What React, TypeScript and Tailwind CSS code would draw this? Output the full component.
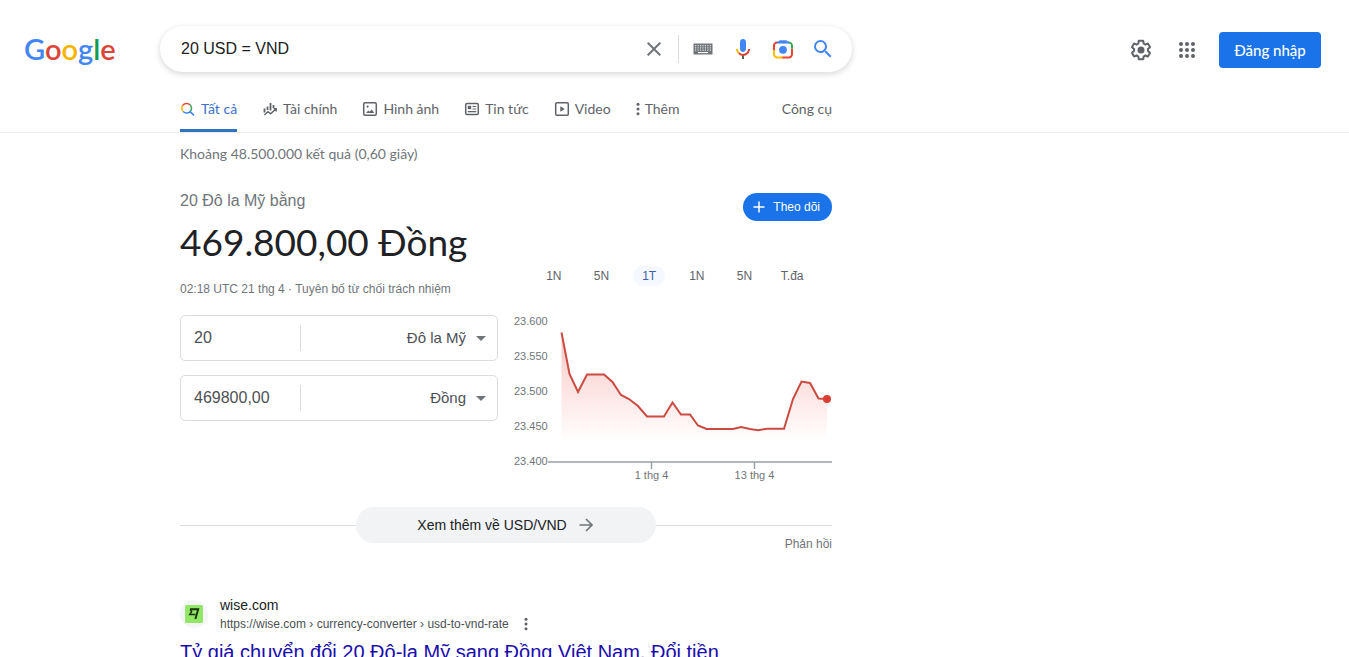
import { useState } from "react";
import type { ReactNode } from "react";

const RANGES = ["1N", "5N", "1T", "1N", "5N", "T.đa"];

const POINTS: [number, number][] = [
  [49.5, 20.5], [57.5, 62], [66, 80], [75, 62.5], [92, 62.5], [100.5, 70], [109, 83],
  [117, 87], [126, 94], [135, 104.5], [152, 104.5], [160.5, 90.5], [169, 102.5],
  [178, 102.5], [186, 113.5], [194.5, 117], [221, 117], [229, 115], [238, 117],
  [246, 118.2], [255, 116.8], [272, 116.8], [281, 87], [289.5, 69.5], [298, 71],
  [306.5, 86.5], [315, 87],
];

const GRID = ["23.600", "23.550", "23.500", "23.450", "23.400"];

function Logo() {
  return (
    <a href="#" aria-label="Google" className="block font-['Lato',sans-serif] text-[29px] leading-9 font-semibold">
      <span className="text-[#4285f4]">G</span>
      <span className="text-[#db4437]">o</span>
      <span className="text-[#f4b400]">o</span>
      <span className="text-[#4285f4]">g</span>
      <span className="text-[#0f9d58]">l</span>
      <span className="text-[#db4437]">e</span>
    </a>
  );
}

function CloseIcon() {
  return (
    <svg viewBox="0 0 24 24" className="size-6" fill="#70757a">
      <path d="M19 6.41L17.59 5 12 10.59 6.41 5 5 6.41 10.59 12 5 17.59 6.41 19 12 13.41 17.59 19 19 17.59 13.41 12z" />
    </svg>
  );
}

function KeyboardIcon() {
  const cols = [2, 4.5, 7, 9.4, 11.8, 14.2, 16.7];
  return (
    <svg viewBox="0 0 20 12" className="h-3 w-5">
      <rect x="0.5" y="0.5" width="19" height="11" fill="#70757a" />
      {[2.2, 4.4, 6.6].map((y) =>
        cols.map((x) => <rect key={`${x}-${y}`} x={x} y={y} width="1.2" height="1" fill="#fff" />)
      )}
      <rect x="5" y="9" width="10" height="1.1" fill="#fff" />
    </svg>
  );
}

function MicIcon() {
  return (
    <svg viewBox="0 0 24 24" className="size-6">
      <path fill="#4285f4" d="M12 15c1.66 0 3-1.31 3-2.97V4.98C15 3.32 13.66 2 12 2S9 3.32 9 4.98v7.05C9 13.69 10.34 15 12 15z" />
      <path fill="#4f6b58" d="M11 18.08h2V22h-2z" />
      <path fill="#fbbc04" d="M7.05 16.87C5.78 15.59 5 13.83 5 11.99h2c0 1.45.56 2.42 1.47 3.38l-1.42 1.5z" />
      <path fill="#d8453a" d="M12 16.93c-1.44 0-2.61-.57-3.53-1.56l-1.41 1.49C8.33 18.14 10.07 18.99 12 18.99c3.87 0 6.99-3.13 6.99-7H17c-.01 2.76-2.24 4.94-5 4.94z" />
    </svg>
  );
}

function LensIcon() {
  return (
    <svg viewBox="0 0 24 24" className="size-6" fill="none" strokeWidth="2">
      <path stroke="#ea4335" d="M3 13.2V8.6A3.2 3.2 0 0 1 6.2 5.4M21 11.5V17.2A3.2 3.2 0 0 1 17.8 20.4H11" />
      <path stroke="#34a853" d="M17.5 5.4A3.4 3.4 0 0 1 21 8.8V11.5" />
      <path stroke="#4285f4" d="M6 5.4H18" />
      <path stroke="#fbbc04" d="M3 13V17.2A3.2 3.2 0 0 0 6.2 20.4H11.5" />
      <path fill="#4285f4" d="M6.5 6.2L8.6 3.2h6.8l2.1 3z" />
      <circle cx="12" cy="12.8" r="3.9" fill="#4285f4" />
    </svg>
  );
}

function SearchIcon() {
  return (
    <svg viewBox="0 0 24 24" className="size-6" fill="#4285f4">
      <path d="M15.5 14h-.79l-.28-.27A6.471 6.471 0 0 0 16 9.5 6.5 6.5 0 1 0 9.5 16c1.61 0 3.09-.59 4.23-1.57l.27.28v.79l5 4.99L20.49 19l-4.99-5zm-6 0C7.01 14 5 11.99 5 9.5S7.01 5 9.5 5 14 7.01 14 9.5 11.99 14 9.5 14z" />
    </svg>
  );
}

function GearIcon() {
  return (
    <svg viewBox="0 0 24 24" className="size-6" fill="#5f6368">
      <path d="M13.85 22.25h-3.7c-.74 0-1.36-.54-1.45-1.27l-.27-1.89c-.27-.14-.53-.29-.79-.46l-1.8.72c-.7.26-1.47-.03-1.81-.65L2.2 15.53c-.35-.66-.2-1.44.36-1.88l1.53-1.19c-.01-.15-.02-.3-.02-.46 0-.15.01-.31.02-.46l-1.52-1.19c-.59-.45-.74-1.26-.37-1.88l1.85-3.19c.34-.62 1.11-.9 1.79-.63l1.81.73c.26-.17.52-.32.78-.46l.27-1.91c.09-.7.71-1.25 1.44-1.25h3.7c.74 0 1.36.54 1.45 1.27l.27 1.89c.27.14.53.29.79.46l1.8-.72c.71-.26 1.48.03 1.82.65l1.84 3.18c.36.66.2 1.44-.36 1.88l-1.52 1.19c.01.15.02.3.02.46s-.01.31-.02.46l1.52 1.19c.56.45.72 1.23.37 1.86l-1.86 3.22c-.34.62-1.11.9-1.8.63l-1.8-.72c-.26.17-.52.32-.78.46l-.27 1.91c-.1.68-.72 1.22-1.46 1.22zm-3.23-2h2.76l.37-2.55.53-.22c.44-.18.88-.44 1.34-.78l.45-.34 2.38.96 1.38-2.4-2.03-1.58.07-.56c.03-.26.06-.51.06-.78s-.03-.53-.06-.78l-.07-.56 2.03-1.58-1.39-2.4-2.39.96-.45-.35c-.42-.32-.87-.58-1.33-.77l-.52-.22-.37-2.55h-2.76l-.37 2.55-.53.21c-.44.19-.88.44-1.34.79l-.45.33-2.38-.95-1.39 2.39 2.03 1.58-.07.56a7 7 0 0 0-.06.79c0 .26.02.53.06.78l.07.56-2.03 1.58 1.38 2.4 2.39-.96.45.35c.43.33.86.58 1.33.77l.53.22.38 2.55z" />
      <circle cx="12" cy="12" r="3.5" />
    </svg>
  );
}

function AppsIcon() {
  return (
    <svg viewBox="0 0 24 24" className="size-6" fill="#5f6368">
      {[6, 12, 18].map((y) => [6, 12, 18].map((x) => <circle key={`${x}-${y}`} cx={x} cy={y} r="2" />))}
    </svg>
  );
}

function AllIcon() {
  return (
    <svg viewBox="0 0 16 16" className="size-4" fill="none" strokeWidth="1.5">
      <path stroke="#ea4335" d="M2.6 4.6A4.8 4.8 0 0 1 10 3.8" />
      <path stroke="#fbbc04" d="M3.2 10.4A4.8 4.8 0 0 1 2.6 4.6" />
      <path stroke="#34a853" d="M10 3.8A4.8 4.8 0 0 1 10.2 10.6" />
      <path stroke="#4285f4" d="M3.2 10.4A4.8 4.8 0 0 0 10.2 10.6L14 14.4" />
    </svg>
  );
}

function FinanceIcon() {
  return (
    <svg viewBox="0 0 16 16" className="size-4" fill="none" stroke="#5f6368">
      <path d="M2.5 7.5V11.5M5.5 5.5V9M8.5 2V9.5M11.5 4V7" strokeWidth="1.8" />
      <path d="M2.4 14L6 10.6L8.6 12.8L13.6 8.2M11.6 7.8H14.2V10.4" strokeWidth="1.4" />
    </svg>
  );
}

function ImageIcon() {
  return (
    <svg viewBox="0 0 16 16" className="size-4" fill="none" stroke="#5f6368">
      <rect x="1.7" y="1.7" width="12.6" height="12.6" rx="1.5" strokeWidth="1.5" />
      <path d="M4 12L6.3 9.4L7.7 10.8L9.7 8.6L12.3 12z" fill="#5f6368" stroke="none" />
      <circle cx="5.6" cy="5.6" r="1.1" fill="#5f6368" stroke="none" />
    </svg>
  );
}

function NewsIcon() {
  return (
    <svg viewBox="0 0 16 16" className="size-4" fill="none" stroke="#5f6368">
      <rect x="1.7" y="2.5" width="12.6" height="11" rx="1.3" strokeWidth="1.5" />
      <rect x="3.8" y="4.8" width="3.4" height="3.4" fill="#5f6368" stroke="none" />
      <path d="M8.5 5.5H12.3M8.5 8H12.3M3.8 10.6H12.3" strokeWidth="1.2" />
    </svg>
  );
}

function VideoIcon() {
  return (
    <svg viewBox="0 0 16 16" className="size-4" fill="none" stroke="#5f6368">
      <rect x="1.7" y="1.7" width="12.6" height="12.6" rx="1.3" strokeWidth="1.5" />
      <path d="M6.3 5.2L10.7 8L6.3 10.8z" fill="#5f6368" stroke="none" />
    </svg>
  );
}

function DotsIcon() {
  return (
    <svg viewBox="0 0 4 16" className="h-4 w-1" fill="#5f6368">
      <circle cx="2" cy="3.2" r="1.5" />
      <circle cx="2" cy="8" r="1.5" />
      <circle cx="2" cy="12.8" r="1.5" />
    </svg>
  );
}

function NavItem({ icon, label, active }: { icon: ReactNode; label: string; active?: boolean }) {
  return (
    <a
      href="#"
      className={
        active
          ? "flex h-full items-center gap-[5px] border-b-3 border-[#2f72bd] pt-[3px] text-[#3b70c9]"
          : "flex h-full items-center gap-[5px] text-[#5f6368]"
      }
    >
      {icon}
      {label}
    </a>
  );
}

function SearchBox() {
  const [query, setQuery] = useState("20 USD = VND");
  return (
    <form
      className="flex h-[46px] w-full max-w-[692px] items-center rounded-full bg-white pr-[17px] pl-[21px] shadow-[0_2px_5px_1px_rgba(64,60,67,0.16)]"
      onSubmit={(e) => e.preventDefault()}
    >
      <input
        aria-label="Tìm kiếm"
        className="min-w-0 flex-1 bg-transparent text-base text-[#202124] outline-none"
        value={query}
        onChange={(e) => setQuery(e.target.value)}
      />
      <button type="button" aria-label="Xóa" className="mr-3" onClick={() => setQuery("")}>
        <CloseIcon />
      </button>
      <div className="flex items-center gap-4 border-l border-[#dadce0] py-[2px] pl-3">
        <button type="button" aria-label="Bàn phím" className="flex w-6 justify-center"><KeyboardIcon /></button>
        <button type="button" aria-label="Giọng nói"><MicIcon /></button>
        <button type="button" aria-label="Hình ảnh"><LensIcon /></button>
        <button type="submit" aria-label="Tìm"><SearchIcon /></button>
      </div>
    </form>
  );
}

function CurrencyRow({ id, amount, currency }: { id: string; amount: string; currency: string }) {
  const [value, setValue] = useState(amount);
  return (
    <div className="flex h-[46px] items-center rounded-[5px] border border-[#dadce0] text-[#4d5156]">
      <input
        id={id}
        aria-label={`Số tiền ${currency}`}
        className="h-[26px] w-[120px] border-r border-[#dadce0] pl-[13px] text-base outline-none"
        value={value}
        onChange={(e) => setValue(e.target.value)}
      />
      <label className="flex min-w-0 flex-1 items-center justify-end gap-[10px] pr-[11px]">
        <select
          aria-label="Đơn vị tiền tệ"
          className="flex-1 appearance-none bg-transparent text-[15px] outline-none [text-align-last:right]"
        >
          <option>{currency}</option>
        </select>
        <svg viewBox="0 0 10 5" className="h-[5px] w-[10px]" fill="#70757a">
          <path d="M0 0h10L5 5z" />
        </svg>
      </label>
    </div>
  );
}

function RateChart() {
  const line = POINTS.map((p) => p.join(",")).join(" ");
  const [endX, endY] = POINTS[POINTS.length - 1];
  return (
    <svg viewBox="0 0 320 175" className="w-full font-['Liberation_Sans',Arial,sans-serif]" role="img" aria-label="USD/VND">
      <defs>
        <linearGradient id="fade" x1="0" y1="20" x2="0" y2="130" gradientUnits="userSpaceOnUse">
          <stop offset="0" stopColor="#ea4335" stopOpacity="0.3" />
          <stop offset="1" stopColor="#ea4335" stopOpacity="0" />
        </linearGradient>
      </defs>
      {GRID.map((label, i) => (
        <text key={label} x="2" y={13 + i * 35} fontSize="11" fill="#70757a">
          {label}
        </text>
      ))}
      <polygon points={`49.5,149 ${line} 315,149`} fill="url(#fade)" />
      <polyline points={line} fill="none" stroke="#cb4b41" strokeWidth="2" />
      <circle cx={endX} cy={endY} r="4" fill="#d93f33" />
      <path d="M36 150H320M139.5 150v7M242.5 150v7" stroke="#9aa0a6" strokeWidth="1.5" fill="none" />
      <text x="139.5" y="167" fontSize="11" fill="#70757a" textAnchor="middle">1 thg 4</text>
      <text x="242.5" y="167" fontSize="11" fill="#70757a" textAnchor="middle">13 thg 4</text>
    </svg>
  );
}

function Converter() {
  const [range, setRange] = useState(2);
  return (
    <section className="mt-[25px]">
      <div className="flex items-start justify-between">
        <div>
          <h2 className="text-base leading-6 text-[#70757a]">20 Đô la Mỹ bằng</h2>
          <p className="mt-[6px] font-['Lato',sans-serif] text-[37px] leading-[46px] text-[#202124]">469.800,00 Đồng</p>
        </div>
        <button className="mt-1 flex h-7 items-center gap-2 rounded-full bg-[#1a73e8] pr-3 pl-[10px] text-xs font-medium text-white">
          <svg viewBox="0 0 12 12" className="size-3" stroke="#fff" strokeWidth="1.5">
            <path d="M6 0.5v11M0.5 6h11" />
          </svg>
          Theo dõi
        </button>
      </div>

      <div className="mt-px flex gap-[14px]">
        <div className="w-[318px]">
          <p className="pt-[15px] text-xs leading-4 whitespace-nowrap text-[#70757a]">
            02:18 UTC 21 thg 4 · <a href="#">Tuyên bố từ chối trách nhiệm</a>
          </p>
          <div className="mt-[18px] flex flex-col gap-[14px]">
            <CurrencyRow id="from" amount="20" currency="Đô la Mỹ" />
            <CurrencyRow id="to" amount="469800,00" currency="Đồng" />
          </div>
        </div>
        <div className="min-w-0 flex-1">
          <div className="flex justify-between pr-4 pl-[18px]">
            {RANGES.map((label, i) => (
              <button key={i} onClick={() => setRange(i)} className="flex h-5 w-12 justify-center text-xs leading-5">
                <span className={i === range ? "w-8 rounded-full bg-[#f5f8fe] text-[#3c5fae]" : "text-[#5f6368]"}>
                  {label}
                </span>
              </button>
            ))}
          </div>
          <div className="mt-[26px]">
            <RateChart />
          </div>
        </div>
      </div>

      <div className="mt-5 flex items-center">
        <span className="h-px flex-1 bg-[#dadce0]" />
        <a href="#" className="flex h-9 w-[300px] items-center justify-center gap-3 rounded-full bg-[#f1f3f4] pr-[2px] text-sm text-[#202124]">
          Xem thêm về USD/VND
          <svg viewBox="0 0 14 14" className="size-[14px]" fill="none" stroke="#70757a" strokeWidth="1.6">
            <path d="M0.5 7H13M7 1L13 7L7 13" />
          </svg>
        </a>
        <span className="h-px flex-1 bg-[#dadce0]" />
      </div>
      <div className="-mt-[7px] text-right text-xs leading-4 text-[#70757a]">
        <a href="#">Phản hồi</a>
      </div>
    </section>
  );
}

function Result() {
  return (
    <article className="mt-[43px]">
      <div className="flex items-center">
        <span className="flex size-7 items-center justify-center rounded-full bg-[#f5f6f7]">
          <svg viewBox="0 0 18 18" className="size-[18px]">
            <rect width="18" height="18" rx="1.5" fill="#94e667" />
            <path d="M5 4.3H13.2L10.4 14" fill="none" stroke="#163300" strokeWidth="1.9" />
            <path d="M5.2 4.3L6.6 6.8L4.8 9.4H10.5" fill="none" stroke="#163300" strokeWidth="1.5" />
          </svg>
        </span>
        <div className="ml-3">
          <p className="text-sm leading-5 text-[#202124]">wise.com</p>
          <p className="text-xs leading-[18px] text-[#4d5156]">https://wise.com › currency-converter › usd-to-vnd-rate</p>
        </div>
        <button aria-label="Tùy chọn" className="ml-[15px] self-end pb-px">
          <DotsIcon />
        </button>
      </div>
      <h3 className="mt-[6px] text-xl leading-[26px] text-[#1a0dab]">
        <a href="#">Tỷ giá chuyển đổi 20 Đô-la Mỹ sang Đồng Việt Nam, Đổi tiền</a>
      </h3>
    </article>
  );
}

export default function App() {
  return (
    <div className="h-screen overflow-hidden bg-white font-['Liberation_Sans',Arial,sans-serif]">
      <header className="border-b border-[#ebebeb]">
        <div className="flex items-center pt-[26px] pr-7">
          <div className="w-40 shrink-0 pl-6">
            <Logo />
          </div>
          <SearchBox />
          <div className="ml-auto flex items-center pt-[2px] pl-6">
            <button aria-label="Cài đặt"><GearIcon /></button>
            <button aria-label="Ứng dụng" className="mr-5 ml-[22px]"><AppsIcon /></button>
            <a
              href="#"
              className="flex h-9 w-[102px] items-center justify-center rounded bg-[#1a73e8] font-['Lato',sans-serif] text-[15px] font-medium whitespace-nowrap text-white"
            >
              Đăng nhập
            </a>
          </div>
        </div>
        <div className="mt-[14px] ml-[180px] flex h-[46px] max-w-[652px] items-center justify-between font-['Lato',sans-serif] text-sm whitespace-nowrap">
          <nav className="flex h-full items-center gap-[25px]">
            <NavItem icon={<AllIcon />} label="Tất cả" active />
            <NavItem icon={<FinanceIcon />} label="Tài chính" />
            <NavItem icon={<ImageIcon />} label="Hình ảnh" />
            <NavItem icon={<NewsIcon />} label="Tin tức" />
            <NavItem icon={<VideoIcon />} label="Video" />
            <NavItem icon={<DotsIcon />} label="Thêm" />
          </nav>
          <button className="text-[#5f6368]">Công cụ</button>
        </div>
      </header>
      <main className="ml-[180px] max-w-[652px]">
        <p className="pt-[11px] font-['Lato',sans-serif] text-sm leading-5 text-[#70757a]">
          Khoảng 48.500.000 kết quả (0,60 giây)
        </p>
        <Converter />
        <Result />
      </main>
    </div>
  );
}
